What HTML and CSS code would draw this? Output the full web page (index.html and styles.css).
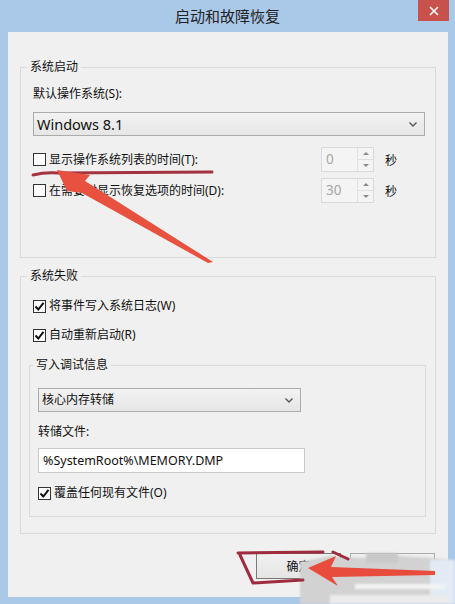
FILE: index.html
```html
<!DOCTYPE html>
<html lang="zh-CN">
<head>
<meta charset="utf-8">
<title>启动和故障恢复</title>
<link rel="stylesheet" href="styles.css">
</head>
<body>
<div class="window">
  <div class="titlebar">
    <span class="title">启动和故障恢复</span>
    <div class="close">
      <svg width="10" height="10" viewBox="0 0 10 10"><path d="M1 1L9 9M9 1L1 9" stroke="#fff" stroke-width="1.6" fill="none"/></svg>
    </div>
  </div>
  <div class="client">
    <fieldset class="group g-startup">
      <legend>系统启动</legend>
      <div class="label">默认操作系统(S):</div>
      <div class="select wide">
        <span class="latin">Windows 8.1</span>
        <svg class="chev" width="8" height="5" viewBox="0 0 8 5"><path d="M0.5 0.5L4 4L7.5 0.5" stroke="#555" stroke-width="1.4" fill="none"/></svg>
      </div>
      <div class="timerow first">
        <div class="check"><span class="box"></span><span>显示操作系统列表的时间(T):</span></div>
        <div class="spin"><span class="val">0</span><div class="arrows"><span class="up"></span><span class="down"></span></div></div>
        <span class="unit">秒</span>
      </div>
      <div class="timerow">
        <div class="check"><span class="box"></span><span>在需要时显示恢复选项的时间(D):</span></div>
        <div class="spin"><span class="val">30</span><div class="arrows"><span class="up"></span><span class="down"></span></div></div>
        <span class="unit">秒</span>
      </div>
    </fieldset>

    <fieldset class="group g-failure">
      <legend>系统失败</legend>
      <div class="check row1"><span class="box on"><svg width="11" height="11" viewBox="0 0 11 11"><path d="M1.5 5.5L4.3 8.5L9.5 1.8" stroke="#111" stroke-width="2" fill="none"/></svg></span><span>将事件写入系统日志(W)</span></div>
      <div class="check row2"><span class="box on"><svg width="11" height="11" viewBox="0 0 11 11"><path d="M1.5 5.5L4.3 8.5L9.5 1.8" stroke="#111" stroke-width="2" fill="none"/></svg></span><span>自动重新启动(R)</span></div>
      <fieldset class="group inner">
        <legend>写入调试信息</legend>
        <div class="select narrow">
          <span>核心内存转储</span>
          <svg class="chev" width="8" height="5" viewBox="0 0 8 5"><path d="M0.5 0.5L4 4L7.5 0.5" stroke="#555" stroke-width="1.4" fill="none"/></svg>
        </div>
        <div class="label dump">转储文件:</div>
        <div class="input">%SystemRoot%\MEMORY.DMP</div>
        <div class="check row3"><span class="box on"><svg width="11" height="11" viewBox="0 0 11 11"><path d="M1.5 5.5L4.3 8.5L9.5 1.8" stroke="#111" stroke-width="2" fill="none"/></svg></span><span>覆盖任何现有文件(O)</span></div>
      </fieldset>
    </fieldset>

    <div class="buttons">
      <div class="btn ok">确定</div>
      <div class="btn cancel"></div>
    </div>
  </div>
</div>

<svg class="annot" width="455" height="604" viewBox="0 0 455 604">
  <defs>
    <filter id="soft" x="-10%" y="-10%" width="120%" height="120%"><feGaussianBlur stdDeviation="1.2"/></filter>
  </defs>
  <!-- underline -->
  <path d="M33 175 Q45 172 58 173 L212 172" stroke="#a3333f" stroke-width="3" fill="none" stroke-linecap="round"/>
  <!-- top arrow -->
  <polygon points="57,170 90,175 85,181 213,262 208,263 82,193 67,191" fill="#e8503f"/>
  <!-- smudges -->
  <g filter="url(#soft)">
    <polygon points="300,562 330,556 360,558 398,556 430,558 455,560 455,604 300,604" fill="#d2d2d2"/>
    <rect x="430" y="560" width="25" height="44" fill="#e2ebf4"/>
    <rect x="355" y="584" width="90" height="5" fill="#f3f3f3"/>
    <rect x="330" y="595" width="120" height="9" fill="#ebebeb"/>
    <rect x="366" y="553" width="32" height="10" fill="#c9c9c9"/>
  </g>
  <!-- bracket around OK -->
  <path d="M238 553 L323 552 M333 552 L348 559 M240 555 L253 583 L303 580" stroke="#9e2b3e" stroke-width="3" fill="none" stroke-linecap="round" stroke-linejoin="round"/>
  <!-- bottom arrow -->
  <polygon points="308,568 336,556 331,567 435,571 435,575 332,577 338,586" fill="#e84c3d"/>
</svg>
</body>
</html>
```

FILE: styles.css
```css
* { box-sizing: border-box; }

html, body {
  margin: 0;
  padding: 0;
}

body {
  width: 455px;
  height: 604px;
  overflow: hidden;
  background: #aac9e9;
  font-family: "Noto Sans", "Noto Sans CJK SC", sans-serif;
  font-size: 12px;
  color: #111;
  position: relative;
}

.window {
  width: 455px;
  height: 604px;
  display: flex;
  flex-direction: column;
}

.titlebar {
  height: 32px;
  flex: none;
  display: flex;
  align-items: center;
  justify-content: center;
  position: relative;
}

.title {
  font-family: "Noto Sans CJK SC", sans-serif;
  font-size: 15px;
  color: #222;
  line-height: 20px;
}

.close {
  position: absolute;
  left: 418px;
  top: 0;
  width: 31px;
  height: 21px;
  background: #c8524b;
  display: flex;
  align-items: center;
  justify-content: center;
}

.client {
  margin: 0 7px 7px 8px;
  height: 565px;
  background: #f0f0f0;
  padding: 25px 12px 0 12px;
  display: flex;
  flex-direction: column;
}

.group {
  margin: 0;
  border: 1px solid #dadada;
  padding: 0 10px 0 12px;
  min-width: 0;
}

.group legend {
  padding: 0 3px;
  margin-left: -6px;
  line-height: 20px;
  color: #111;
}

.g-startup { padding-bottom: 54px; }

.g-failure {
  margin-top: 8px;
  padding-bottom: 16px;
}

.label {
  line-height: 20px;
  margin-top: 7px;
}

.select {
  height: 24px;
  border: 1px solid #acacac;
  background: linear-gradient(#f2f2f2, #e6e6e6);
  display: flex;
  align-items: center;
  justify-content: space-between;
  padding: 0 7px 0 3px;
  line-height: 20px;
}

.select .latin { font-size: 14.5px; }

.select.wide { margin-top: 8px; }

.select.narrow {
  width: 263px;
  margin-top: 13px;
}

.check {
  display: flex;
  align-items: center;
  gap: 3px;
  line-height: 20px;
  height: 20px;
}

.box {
  width: 13px;
  height: 13px;
  border: 1px solid #333;
  background: #fff;
  flex: none;
  display: flex;
  align-items: center;
  justify-content: center;
}

.timerow {
  display: flex;
  align-items: center;
  height: 25px;
  margin-top: 6px;
}

.timerow.first { margin-top: 11px; }

.timerow .check { flex: 1; }

.spin {
  width: 53px;
  height: 25px;
  border: 1px solid #d9d9d9;
  background: #f4f4f4;
  display: flex;
}

.spin .val {
  flex: 1;
  color: #a6a6a6;
  font-size: 13.5px;
  padding-left: 4px;
  line-height: 22px;
}

.arrows {
  width: 16px;
  display: flex;
  flex-direction: column;
  border-left: 1px solid #e0e0e0;
}

.arrows span {
  flex: 1;
  display: flex;
  align-items: center;
  justify-content: center;
}

.arrows .up { border-bottom: 1px solid #e0e0e0; }

.arrows .up::before {
  content: "";
  border-left: 3px solid transparent;
  border-right: 3px solid transparent;
  border-bottom: 3px solid #8a8a8a;
}

.arrows .down::before {
  content: "";
  border-left: 3px solid transparent;
  border-right: 3px solid transparent;
  border-top: 3px solid #8a8a8a;
}

.unit {
  margin-left: 11px;
  width: 40px;
}

.row1 { margin-top: 10px; }
.row2 { margin-top: 9px; }

.inner {
  margin: 10px -1px 0 -4px;
  padding: 0 8px 13px 8px;
}

.inner legend { margin-left: -5px; }

.label.dump { margin-top: 10px; }

.input {
  width: 267px;
  height: 25px;
  margin-top: 6px;
  border: 1px solid #c9c9c9;
  background: #fff;
  padding-left: 4px;
  font-size: 12.5px;
  line-height: 23px;
}

.row3 { margin-top: 10px; }

.buttons {
  display: flex;
  justify-content: flex-end;
  gap: 9px;
  margin-top: 19px;
  padding-right: 1px;
}

.btn {
  width: 85px;
  height: 26px;
  border: 1px solid #acacac;
  background: linear-gradient(#f0f0f0, #e5e5e5);
  display: flex;
  align-items: center;
  justify-content: center;
}

.btn.ok { border-color: #7a7a7a; }

.annot {
  position: absolute;
  left: 0;
  top: 0;
  pointer-events: none;
}
```
